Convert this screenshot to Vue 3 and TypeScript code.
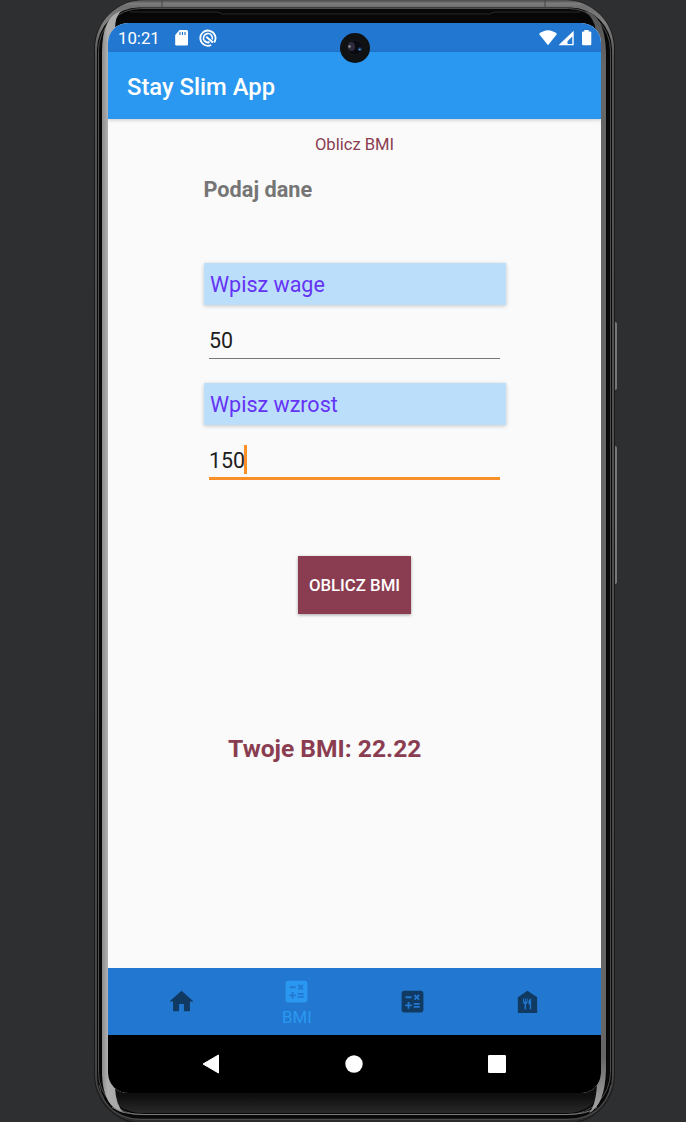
<script setup lang="ts">
import { computed, ref } from 'vue'

interface Field {
  label: string
  value: string
  active: boolean
}

interface Tab {
  id: number
  icon: 'home' | 'calc' | 'food'
  label: string
}

const fields = ref<Field[]>([
  { label: 'Wpisz wage', value: '50', active: false },
  { label: 'Wpisz wzrost', value: '150', active: true },
])

const tabs: Tab[] = [
  { id: 0, icon: 'home', label: '' },
  { id: 1, icon: 'calc', label: 'BMI' },
  { id: 2, icon: 'calc', label: '' },
  { id: 3, icon: 'food', label: '' },
]
const activeTab = ref(1)

const bmi = computed(() => {
  const weight = Number(fields.value[0].value)
  const height = Number(fields.value[1].value) / 100
  return (weight / (height * height)).toFixed(2)
})
</script>

<template>
  <div class="stage">
    <svg class="frame" width="686" height="1122" viewBox="0 0 686 1122">
      <defs>
        <linearGradient id="rim" x1="0" y1="0" x2="0" y2="1">
          <stop offset="0" stop-color="#4a4a4a" />
          <stop offset="0.003" stop-color="#7c7c7c" />
          <stop offset="0.006" stop-color="#707070" />
          <stop offset="0.02" stop-color="#808080" />
          <stop offset="0.05" stop-color="#555" />
          <stop offset="0.97" stop-color="#444" />
          <stop offset="1" stop-color="#2a2a2a" />
        </linearGradient>
        <linearGradient id="chin" x1="0" y1="0" x2="0" y2="1">
          <stop offset="0" stop-color="#0c0c0c" />
          <stop offset="0.6" stop-color="#0f0f0f" />
          <stop offset="1" stop-color="#292929" />
        </linearGradient>
        <linearGradient id="shineLeft" x1="0" y1="0" x2="1" y2="0">
          <stop offset="0" stop-color="#8c8c8c" />
          <stop offset="0.25" stop-color="#aeaeae" />
          <stop offset="1" stop-color="#a5a5a5" />
        </linearGradient>
        <linearGradient id="shineRight" x1="0" y1="0" x2="0" y2="1">
          <stop offset="0" stop-color="#555" />
          <stop offset="0.05" stop-color="#666" />
          <stop offset="0.95" stop-color="#666" />
          <stop offset="1" stop-color="#aaa" />
        </linearGradient>
      </defs>
      <rect x="612" y="322" width="5" height="68" rx="2" fill="#777" />
      <rect x="613" y="325" width="2" height="63" fill="#292929" />
      <rect x="612" y="446" width="5" height="138" rx="2" fill="#777" />
      <rect x="613" y="449" width="2" height="133" fill="#222" />
      <rect x="94" y="-0.500" width="521" height="1125" rx="50" fill="#1b1b1b" />
      <rect x="95" y="0" width="519" height="1123" rx="49" fill="url(#rim)" />
      <rect x="97" y="7.500" width="515" height="1111" rx="42" fill="#090909" />
      <rect x="98.500" y="8.500" width="512" height="1106" rx="42" fill="none" stroke="#4d4d4d" />
      <path d="M162 0v7M545 0v7" stroke="#444" />
      <rect x="101" y="10" width="506" height="1104" rx="40" fill="#070707" />
      <path d="M130 12H218L222 14H490L494 12H580" fill="none" stroke="#292929" />
      <path d="M103 1070Q104 1110 140 1113H570Q603 1110 606 1070Z" fill="url(#chin)" />
      <path d="M102 70V52Q102 17 121 11Q115 17 115 29L122 90V1040L115 1088Q116 1106 124 1113Q103 1107 102 1075Z" fill="url(#shineLeft)" />
      <path d="M606 70V52Q605 14 584 11Q594 17 596 31L590 90V1040L597 1084Q596 1105 589 1113Q605 1105 606 1070Z" fill="url(#shineRight)" />
      <path d="M112 1107Q122 1114.500 145 1114.500H565Q588 1114.500 597 1107" fill="none" stroke="#7d7d7d" />
      <path d="M99 1085Q106 1119.500 143 1119.500H567Q604 1119.500 611 1085" fill="none" stroke="#4c4c4c" />
    </svg>

    <div class="screen">
      <header class="status">
        <span class="clock">10:21</span>
        <svg class="sd" width="13" height="16" viewBox="0 0 13 16">
          <path d="M4.500 0H11.500Q13 0 13 1.500V14.200Q13 15.500 11.500 15.500H1.500Q.2 15.500 .2 14.200V5Z" fill="#fff" />
          <path d="M5 2V5M7.500 2V5M10 2V5" stroke="#2278d1" stroke-width="1.200" />
        </svg>
        <svg class="debug" width="18" height="18" viewBox="0 0 18 18" fill="none" stroke="#fff">
          <path d="M12.200 16A7.600 7.600 0 1 1 15.200 13.400" stroke-width="1.800" />
          <path d="M5.300 11.700A4.500 4.500 0 1 1 13.200 10.500" stroke-width="1.600" />
          <path d="M7.300 7.800L14 13.400M5.300 11.700Q7.500 14.300 10.500 13" stroke-width="2" />
        </svg>
        <span class="grow"></span>
        <svg class="signals" width="54" height="17" viewBox="0 0 54 17" fill="#fff">
          <path d="M0 4Q9-3.500 18 4L9 15.200Z" />
          <path d="M34.700 .7V15.300H19.500ZM33.300 6.500L28.500 11.200V13.900H33.300Z" fill-rule="evenodd" />
          <path d="M45.300 0H49.700V1.500H51.200Q52.300 1.500 52.300 2.800V14Q52.300 15.300 51.200 15.300H44.300Q43 15.300 43 14V2.800Q43 1.500 44.300 1.500H45.300Z" />
        </svg>
      </header>

      <div class="appbar"><h1>Stay Slim App</h1></div>

      <main class="content">
        <p class="heading">Oblicz BMI</p>
        <h2>Podaj dane</h2>
        <section v-for="field in fields" :key="field.label" class="field">
          <div class="label">{{ field.label }}</div>
          <div class="entry" :class="{ active: field.active }">
            <span>{{ field.value }}</span><i v-if="field.active" class="caret"></i>
          </div>
        </section>
        <button class="submit" type="button">OBLICZ BMI</button>
        <p class="result">Twoje BMI: {{ bmi }}</p>
      </main>

      <nav class="tabs">
        <a v-for="tab in tabs" :key="tab.id" class="tab" :class="{ selected: tab.id === activeTab }" @click="activeTab = tab.id">
          <svg v-if="tab.icon === 'home'" width="29" height="29" viewBox="0 0 24 24" fill="currentColor">
            <path d="M10 20v-6h4v6h5v-8h3L12 3 2 12h3v8z" />
          </svg>
          <svg v-else-if="tab.icon === 'calc'" width="29" height="29" viewBox="0 0 24 24" fill="currentColor">
            <path d="M19 3H5c-1.100 0-2 .9-2 2v14c0 1.100.9 2 2 2h14c1.100 0 2-.9 2-2V5c0-1.100-.9-2-2-2zm-5.970 4.060L14.090 6l1.410 1.410L16.910 6l1.060 1.060-1.410 1.410 1.410 1.410-1.060 1.060-1.410-1.400-1.410 1.410-1.060-1.060 1.410-1.410-1.410-1.420zm-6.780.66h5v1.500h-5v-1.500zM11.500 16h-2v2H8v-2H6v-1.500h2v-2h1.500v2h2V16zm6.500 1.250h-5v-1.500h5v1.500zm0-2.500h-5v-1.500h5v1.500z" />
          </svg>
          <svg v-else width="29" height="29" viewBox="0 0 24 24">
            <path d="M12 3L20 8.500V21.500H4V8.500Z" fill="currentColor" />
            <path d="M8.300 9.500H9.100V12.300H9.800V9.500H10.600V12.300H11.300V9.500H12.100V12.500Q12.100 13.900 10.800 14.200V18.500H9.600V14.200Q8.300 13.900 8.300 12.500ZM15 9.500V18.500H13.900V14.500H12.800V11.800Q12.900 9.900 15 9.500Z" fill="#2278d1" />
          </svg>
          <span v-if="tab.label">{{ tab.label }}</span>
        </a>
      </nav>

      <footer class="system">
        <svg width="18" height="20" viewBox="0 0 18 20"><path d="M1 10L16.500 1V19Z" fill="#fff" stroke="#fff" stroke-linejoin="round" /></svg>
        <svg width="18" height="18" viewBox="0 0 18 18"><circle cx="9" cy="9" r="8.700" fill="#fff" /></svg>
        <svg width="18" height="18" viewBox="0 0 18 18"><rect width="18" height="18" rx="1.200" fill="#fff" /></svg>
      </footer>
    </div>

    <svg class="camera" width="30" height="30" viewBox="0 0 30 30">
      <circle cx="15" cy="15" r="15" fill="#101112" />
      <circle cx="15" cy="14.500" r="7.500" fill="#0a0a12" stroke="#17181b" />
      <ellipse cx="11.500" cy="13.500" rx="3.500" ry="4.500" fill="#302b3c" />
      <circle cx="9.500" cy="13.500" r="1.300" fill="#8c9693" />
      <circle cx="19.800" cy="16.300" r="2" fill="#153a62" />
      <circle cx="19.800" cy="16.500" r=".8" fill="#70b4d8" />
    </svg>
  </div>
</template>

<style>
body {
  margin: 0;
  background: #2e2f31;
}
</style>

<style scoped>
.stage {
  position: relative;
  width: 686px;
  height: 1122px;
  overflow: hidden;
  background: #2e2f31;
  font-family: Roboto, 'Liberation Sans', sans-serif;
}
.frame {
  position: absolute;
  inset: 0;
}
.screen {
  position: relative;
  z-index: 1;
  display: flex;
  flex-direction: column;
  width: 493px;
  height: 1070px;
  margin: 23px 0 0 108px;
  border-radius: 20px;
  overflow: hidden;
  background: #fafafa;
}
.camera {
  position: absolute;
  z-index: 2;
  left: 340px;
  top: 33px;
}
h1, h2, p {
  margin: 0;
}
.status {
  display: flex;
  align-items: center;
  box-sizing: border-box;
  height: 29px;
  padding: 0 8px 0 10px;
  background: #2278d1;
}
.clock {
  width: 57px;
  color: #fff;
  font-size: 16.8px;
  line-height: 29px;
  padding-top: 1px;
}
.debug {
  margin-left: 11px;
}
.signals {
  margin-top: 1px;
}
.grow {
  flex: 1;
}
.appbar {
  position: relative;
  z-index: 1;
  display: flex;
  align-items: center;
  height: 67px;
  padding: 2px 0 0 19px;
  box-sizing: border-box;
  background: #2a98f0;
  box-shadow: 0 1px 4px rgba(0, 0, 0, 0.2);
}
h1 {
  color: #fff;
  font-size: 23.8px;
  font-weight: 500;
}
.content {
  display: flex;
  flex-direction: column;
  flex: 1;
  box-sizing: border-box;
  width: 302px;
  margin-left: 95.5px;
  padding-top: 15px;
}
.heading {
  color: #8a3d51;
  font-size: 16.6px;
  line-height: 22px;
  text-align: center;
}
h2 {
  margin: 20px 0 60px;
  color: #757575;
  font-size: 21.7px;
  line-height: 27px;
}
.field {
  height: 120px;
}
.label {
  box-sizing: border-box;
  height: 42px;
  padding-left: 6.5px;
  background: #bbdefb;
  box-shadow: 0 1px 4px rgba(0, 0, 0, 0.22);
  color: #6433f4;
  font-size: 21.5px;
  line-height: 44px;
}
.entry {
  display: flex;
  align-items: center;
  box-sizing: border-box;
  height: 37px;
  margin: 17px 5.5px 0;
  border-bottom: 1px solid #777;
  color: #202020;
  font-size: 21.4px;
}
.entry.active {
  height: 38px;
  border-bottom: 3px solid #fb9029;
}
.entry.active span {
  padding-top: 2px;
}
.caret {
  width: 3px;
  height: 29px;
  margin-left: -1px;
  background: #fb9029;
}
.submit {
  align-self: center;
  width: 113px;
  height: 58px;
  margin-top: 53px;
  padding: 0;
  border: 0;
  background: #8a3d51;
  box-shadow: 0 1px 3px rgba(0, 0, 0, 0.35);
  color: #fff;
  font: 500 16.8px/56px Roboto, 'Liberation Sans', sans-serif;
  white-space: nowrap;
}
.result {
  margin: 120px 0 0 24.5px;
  color: #8a3d51;
  font-size: 24.6px;
  font-weight: 700;
  line-height: 30px;
}
.tabs {
  display: flex;
  height: 67px;
  padding: 0 16px;
  background: #2278d1;
}
.tab {
  display: flex;
  flex: 1;
  flex-direction: column;
  align-items: center;
  justify-content: center;
  color: #103a61;
}
.tab.selected {
  padding-top: 1px;
  color: #2a98f0;
}
.tab span {
  padding-top: 1px;
  font-size: 16.8px;
  line-height: 20px;
}
.system {
  display: flex;
  align-items: center;
  justify-content: space-between;
  height: 58px;
  padding: 0 95.5px 0 93.5px;
  background: #000;
}
</style>
